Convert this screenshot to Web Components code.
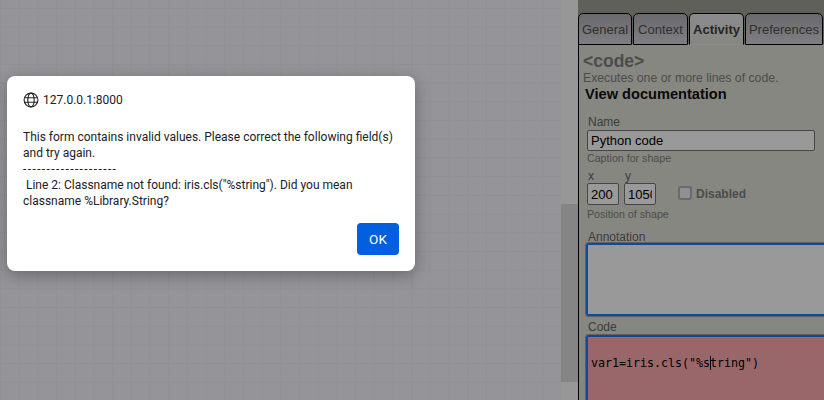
<!DOCTYPE html>
<html>
<head>
<meta charset="utf-8">
<title>Rule editor</title>
<style>
	html, body { margin: 0; height: 100%; overflow: hidden; }
	.dashes { letter-spacing: 1.4px; }
</style>
</head>
<body>
<studio-page>
	<grid-canvas slot="canvas"></grid-canvas>
	<inspector-panel slot="panel">
		<tab-strip></tab-strip>
		<shape-form></shape-form>
	</inspector-panel>
	<alert-dialog slot="dialog" origin="127.0.0.1:8000">This form contains invalid values. Please correct the following field(s) and try again.
<span class="dashes">--------------------</span>
 Line 2: Classname not found: iris.cls("%string"). Did you mean classname %Library.String?</alert-dialog>
</studio-page>

<script>
class StudioPage extends HTMLElement {
	constructor(){
		super();
		this.attachShadow({mode : 'open'}).innerHTML = `
			<style>
				:host{
					display: block;
					position: relative;
					width: 824px;
					height: 400px;
					overflow: hidden;
				}
				.row{
					display: flex;
					height: 100%;
				}
				.scrim{
					position: absolute;
					inset: 0;
					background: rgba(0, 0, 0, 0.4);
				}
			</style>
			<div class="row">
				<slot name="canvas"></slot>
				<slot name="panel"></slot>
			</div>
			<div class="scrim"></div>
			<slot name="dialog"></slot>
		`;
	}
}

class GridCanvas extends HTMLElement {
	constructor(){
		super();
		this.attachShadow({mode : 'open'}).innerHTML = `
			<style>
				:host{
					display: flex;
					flex: 0 0 578px;
					height: 100%;
					background-color: #f8f8ff;
					background-image:
						linear-gradient(#f0f0fa 1px, transparent 1px),
						linear-gradient(90deg, #f0f0fa 1px, transparent 1px);
					background-size: 18.7px 18.7px;
					background-position: 0 8px;
				}
				.space{
					flex: 1;
				}
				.scrollbar{
					width: 17px;
					background: #fcfcfc;
					display: flex;
					flex-direction: column;
				}
				.gap{
					height: 204px;
				}
				.thumb{
					height: 178px;
					background: #dedede;
				}
			</style>
			<div class="space"></div>
			<div class="scrollbar">
				<div class="gap"></div>
				<div class="thumb"></div>
			</div>
		`;
	}
}

class InspectorPanel extends HTMLElement {
	constructor(){
		super();
		this.attachShadow({mode : 'open'}).innerHTML = `
			<style>
				:host{
					display: flex;
					flex-direction: column;
					flex: 1;
					min-width: 0;
					height: 100%;
					padding-top: 13px;
					box-sizing: border-box;
					background: #a0a096;
					font-family: "Liberation Sans", Arial, sans-serif;
				}
			</style>
			<slot></slot>
		`;
	}
}

class TabStrip extends HTMLElement {
	constructor(){
		super();
		let tabs = [['General', 54], ['Context', 55], ['Activity', 55], ['Preferences', 78]];
		let html = tabs.map(t => `<div class="tab ${t[0] == 'Activity' ? 'active' : ''}" style="width:${t[1]}px">${t[0]}</div>`).join('');
		this.attachShadow({mode : 'open'}).innerHTML = `
			<style>
				:host{
					display: flex;
					gap: 1px;
					height: 31px;
					flex: none;
					box-sizing: border-box;
					font-size: 13px;
				}
				.tab{
					box-sizing: border-box;
					height: 32px;
					line-height: 31px;
					text-align: center;
					border: 1px solid #000;
					border-radius: 5px 5px 0 0;
					color: #505050;
					background: linear-gradient(#b0b0b6, #d4d4da);
					position: relative;
				}
				.active{
					font-weight: bold;
					border-bottom-color: transparent;
					color: #404040;
					background: linear-gradient(#e8e8ee, #e1e1d7);
				}
			</style>
			${html}
		`;
	}
}

class FormField extends HTMLElement {
	constructor(){
		super();
		this.attachShadow({mode : 'open'}).innerHTML = `
			<style>
				:host{
					display: block;
					color: #666;
				}
				.label{
					font-size: 12px;
					line-height: 14px;
					padding-left: 1px;
				}
				.hint{
					font-size: 10.67px;
					line-height: 15px;
					color: #808080;
				}
			</style>
			<div class="label"><slot name="label"></slot></div>
			<slot></slot>
			<div class="hint"><slot name="hint"></slot></div>
		`;
	}
}

class ShapeForm extends HTMLElement {
	constructor(){
		super();
		this.attachShadow({mode : 'open'}).innerHTML = `
			<style>
				:host{
					display: block;
					flex: 1;
					min-height: 0;
					border-left: 1px solid #000;
					background: #e1e1d7;
					padding: 8px 0 0 4px;
					overflow: hidden;
				}
				h1{
					margin: 0;
					font-size: 17.5px;
					line-height: 19px;
					color: #808080;
				}
				.desc{
					font-size: 12.25px;
					line-height: 14px;
					color: #808080;
				}
				.doc{
					font-size: 14.6px;
					line-height: 18px;
					font-weight: bold;
					color: #111;
					padding-left: 2px;
				}
				.body{
					padding: 12px 0 0 4px;
				}
				input{
					box-sizing: border-box;
					display: block;
					height: 21px;
					border: 1px solid #767676;
					border-radius: 2px;
					background: #fff;
					color: #000;
					padding: 0 3px;
					margin: 0;
					font-family: "Liberation Sans", Arial, sans-serif;
					font-size: 13px;
				}
				.name{
					width: 228px;
					margin-top: 1px;
				}
				.pos{
					display: flex;
					align-items: flex-end;
					margin-top: 3px;
				}
				.xy{
					display: flex;
					gap: 5px;
				}
				.xy input{
					width: 32px;
					height: 22px;
				}
				.check{
					display: flex;
					align-items: center;
					gap: 4px;
					margin-left: 23px;
					font-size: 12px;
					font-weight: bold;
					color: #808080;
					height: 22px;
				}
				.box{
					width: 14px;
					height: 14px;
					box-sizing: border-box;
					margin-top: -2px;
					margin-left: -1px;
					border: 2px solid #b0b0c0;
					border-radius: 3px;
					background: #f0f0f0;
				}
				.hintline{
					font-size: 10.67px;
					line-height: 16px;
					margin-top: 1px;
					color: #808080;
				}
				.area{
					box-sizing: border-box;
					border: 2px solid #1a7ff8;
					outline: 1px solid #a0a0a0;
					border-radius: 2px;
					margin-left: -1px;
					margin-right: -10px;
				}
				.annotation{
					height: 73px;
					margin-top: -1px;
					background: #fff;
				}
				.code{
					height: 120px;
					margin-top: 1px;
					background: #ffaab0;
					font-family: "DejaVu Sans Mono", monospace;
					font-size: 11.63px;
					color: #000;
					padding: 18px 0 0 3px;
					line-height: 16px;
				}
				.caret{
					border-left: 1px solid #000;
					margin-right: -1px;
				}
			</style>
			<h1>&lt;code&gt;</h1>
			<div class="desc">Executes one or more lines of code.</div>
			<div class="doc">View documentation</div>
			<div class="body">
				<form-field>
					<span slot="label">Name</span>
					<input class="name" value="Python code">
					<span slot="hint">Caption for shape</span>
				</form-field>
				<div class="pos">
					<div class="xy">
						<form-field>
							<span slot="label">x</span>
							<input value="200">
						</form-field>
						<form-field>
							<span slot="label">y</span>
							<input value="1050">
						</form-field>
					</div>
					<div class="check"><span class="box"></span>Disabled</div>
				</div>
				<div class="hintline">Position of shape</div>
				<form-field style="margin-top:8px">
					<span slot="label">Annotation</span>
					<div class="area annotation"></div>
				</form-field>
				<form-field style="margin-top:4px">
					<span slot="label">Code</span>
					<div class="area code">var1=iris.cls("%s<span class="caret"></span>tring")</div>
				</form-field>
			</div>
		`;
	}
}

class AlertDialog extends HTMLElement {
	constructor(){
		super();
		this.attachShadow({mode : 'open'}).innerHTML = `
			<style>
				:host{
					display: block;
					position: absolute;
					left: 7px;
					top: 76px;
					width: 408px;
					height: 195px;
					box-sizing: border-box;
					padding: 16px;
					background: #fff;
					border-radius: 8px;
					box-shadow: 0 4px 16px rgba(0, 0, 0, 0.3);
					font-family: Roboto, "Noto Sans", sans-serif;
					font-size: 12px;
					color: #202124;
				}
				.origin{
					display: flex;
					align-items: center;
					gap: 4px;
					height: 16px;
					line-height: 16px;
				}
				svg{
					display: block;
				}
				.msg{
					margin-top: 21px;
					line-height: 16px;
					white-space: pre-wrap;
				}
				.actions{
					position: absolute;
					right: 16px;
					bottom: 16px;
				}
				button{
					display: block;
					width: 42px;
					height: 32px;
					border: 0;
					border-radius: 4px;
					background: #0060df;
					color: #fff;
					font: inherit;
					font-size: 13.5px;
					padding: 0;
				}
			</style>
			<div class="origin">
				<svg width="16" height="16" viewBox="0 0 16 16" fill="none" stroke="#202124" stroke-width="1.1">
					<circle cx="8" cy="8" r="6.9"/>
					<ellipse cx="8" cy="8" rx="3.2" ry="6.9"/>
					<path d="M1.4 5.8h13.2M1.4 10.2h13.2"/>
				</svg>
				<span>${this.getAttribute('origin')}</span>
			</div>
			<div class="msg"><slot></slot></div>
			<div class="actions"><button>OK</button></div>
		`;
	}
}

customElements.define('studio-page', StudioPage);
customElements.define('grid-canvas', GridCanvas);
customElements.define('inspector-panel', InspectorPanel);
customElements.define('tab-strip', TabStrip);
customElements.define('form-field', FormField);
customElements.define('shape-form', ShapeForm);
customElements.define('alert-dialog', AlertDialog);
</script>
</body>
</html>
